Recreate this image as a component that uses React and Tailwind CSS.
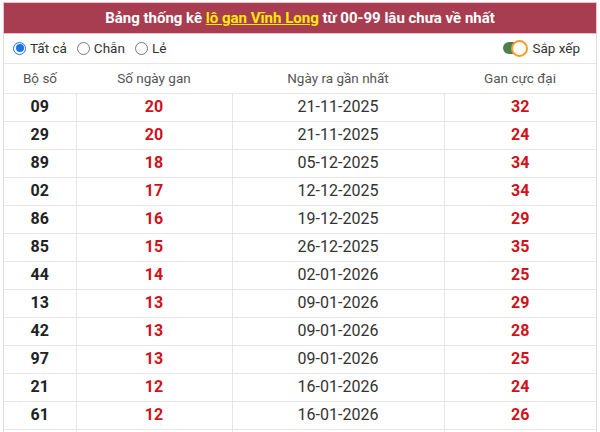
import React from 'react';

const rows = [
    ["09", "20", "21-11-2025", "32"],
    ["29", "20", "21-11-2025", "24"],
    ["89", "18", "05-12-2025", "34"],
    ["02", "17", "12-12-2025", "34"],
    ["86", "16", "19-12-2025", "29"],
    ["85", "15", "26-12-2025", "35"],
    ["44", "14", "02-01-2026", "25"],
    ["13", "13", "09-01-2026", "29"],
    ["42", "13", "09-01-2026", "28"],
    ["97", "13", "09-01-2026", "25"],
    ["21", "12", "16-01-2026", "24"],
    ["61", "12", "16-01-2026", "26"],
];

function Radio({ checked, label }) {
    return (
        <label className="flex items-center gap-[4px] mr-[10px]">
            <span className={"w-[13px] h-[13px] rounded-full border flex items-center justify-center " + (checked ? "border-[#1a73e8]" : "border-[#777]")}>
                {checked && <span className="w-[8px] h-[8px] rounded-full bg-[#1a73e8]"></span>}
            </span>
            <span>{label}</span>
        </label>
    )
}

export default function App() {
    return (
        <div className="w-[600px] h-[432px] overflow-hidden bg-white pt-[3px] px-[3px]" style={{ fontFamily: "Roboto, 'Liberation Sans', sans-serif" }}>
            <div className="border border-[#e0e0e0] border-t-0">
                <div className="h-[30px] bg-[#a83d52] text-white font-bold text-[15px] flex items-center justify-center outline outline-[#f0c0c8]">
                    Bảng thống kê&nbsp;<span className="text-[#ffea00] underline">lô gan Vĩnh Long</span>&nbsp;từ 00-99 lâu chưa về nhất
                </div>
                <div className="h-[31px] flex items-center justify-between pl-[9px] pr-[16px] text-[13.5px] text-[#333] border-b border-[#e6e6e6]">
                    <div className="flex items-center">
                        <Radio checked label="Tất cả" />
                        <Radio label="Chẵn" />
                        <Radio label="Lẻ" />
                    </div>
                    <div className="flex items-center gap-[4px]">
                        <span className="relative w-[25px] h-[17px] flex items-center">
                            <span className="absolute left-0 w-[20px] h-[12px] rounded-full bg-[#4e7d4e]"></span>
                            <span className="absolute right-0 w-[17px] h-[17px] rounded-full bg-white border-2 border-[#f0a030]"></span>
                        </span>
                        <span>Sắp xếp</span>
                    </div>
                </div>
                <table className="w-full border-collapse text-[16px]">
                    <colgroup>
                        <col className="w-[72px]" />
                        <col className="w-[156px]" />
                        <col className="w-[212px]" />
                        <col />
                    </colgroup>
                    <thead>
                        <tr className="h-[29px] text-[13.5px] text-[#555]">
                            <th className="font-normal border-b border-[#e6e6e6]">Bộ số</th>
                            <th className="font-normal border-b border-[#e6e6e6]">Số ngày gan</th>
                            <th className="font-normal border-b border-[#e6e6e6]">Ngày ra gần nhất</th>
                            <th className="font-normal border-b border-[#e6e6e6]">Gan cực đại</th>
                        </tr>
                    </thead>
                    <tbody>
                        {rows.map((r) => (
                            <tr key={r[0]} className="h-[28px] text-center">
                                <td className="font-bold text-[#222] border border-l-0 border-[#e6e6e6]">{r[0]}</td>
                                <td className="font-bold text-[#d0121b] border border-[#e6e6e6]">{r[1]}</td>
                                <td className="text-[#333] border border-[#e6e6e6]">{r[2]}</td>
                                <td className="font-bold text-[#d0121b] border border-r-0 border-[#e6e6e6]">{r[3]}</td>
                            </tr>
                        ))}
                        <tr className="h-[28px]">
                            <td className="border border-l-0 border-[#e6e6e6]"></td>
                            <td className="border border-[#e6e6e6]"></td>
                            <td className="border border-[#e6e6e6]"></td>
                            <td className="border border-r-0 border-[#e6e6e6]"></td>
                        </tr>
                    </tbody>
                </table>
            </div>
        </div>
    )
}
